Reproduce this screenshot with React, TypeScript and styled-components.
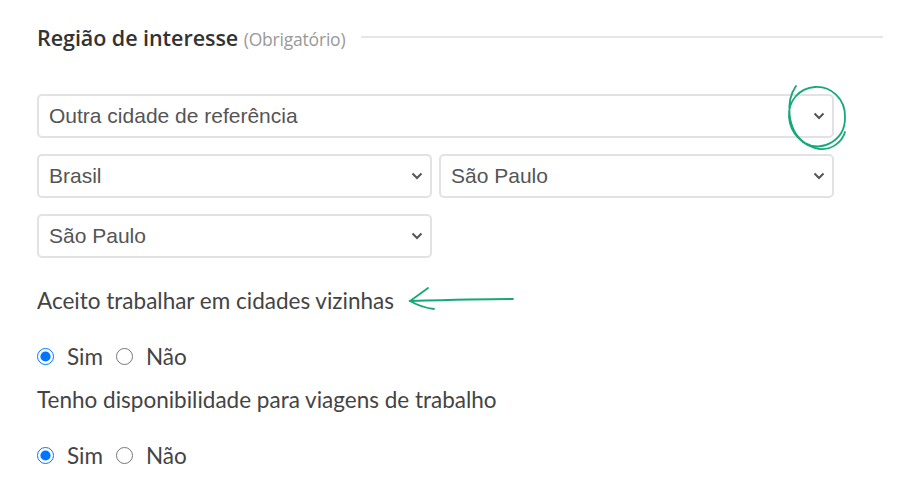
import styled, { createGlobalStyle } from "styled-components";

const GlobalStyle = createGlobalStyle`
  body {
    margin: 0;
    background: #fff;
  }
`;

const Page = styled.div`
  position: relative;
  width: 905px;
  height: 498px;
  padding: 22px 22px 0 37px;
  box-sizing: border-box;
  overflow: hidden;
`;

const TitleRow = styled.div`
  display: flex;
  align-items: center;
  gap: 16px;
  height: 30px;
`;

const Title = styled.h2`
  margin: 0;
  font-family: "Open Sans", sans-serif;
  font-weight: 600;
  font-size: 21.5px;
  letter-spacing: -0.05px;
  color: #333;
  white-space: nowrap;
`;

const Hint = styled.span`
  font-weight: 400;
  font-size: 17.5px;
  letter-spacing: -0.2px;
  color: #999;
`;

const Rule = styled.div`
  flex: 1;
  height: 2px;
  background: #e6e6e6;
`;

const Selects = styled.div`
  display: grid;
  grid-template-columns: 395px 395px;
  column-gap: 7px;
  row-gap: 16px;
  width: 797px;
  margin-top: 42px;
`;

const SelectBox = styled.div<{ $wide?: boolean }>`
  grid-column: ${(p) => (p.$wide ? "1 / 3" : "auto")};
  display: flex;
  align-items: center;
  justify-content: space-between;
  height: 44px;
  padding: 0 7px 0 10px;
  box-sizing: border-box;
  border: 2px solid #e2e2e2;
  border-radius: 5px;
  font-family: "Liberation Sans", Arial, sans-serif;
  font-size: 21px;
  color: #555;
`;

const Chevron = () => (
  <svg width="12" height="8" viewBox="0 0 12 8">
    <path d="M1.5 1.5 L6 6 L10.5 1.5" fill="none" stroke="#555" strokeWidth="2" />
  </svg>
);

const Question = styled.p<{ $top: number }>`
  margin: ${(p) => p.$top}px 0 0;
  font-family: Lato, sans-serif;
  font-size: 22.5px;
  line-height: 24px;
  color: #444;
`;

const RadioRow = styled.div<{ $top: number }>`
  display: flex;
  align-items: center;
  margin-top: ${(p) => p.$top}px;
  height: 24px;
  font-family: Lato, sans-serif;
  font-size: 22.5px;
  color: #444;
`;

const Option = styled.label`
  display: flex;
  align-items: center;
  gap: 13px;
  margin-right: 13px;
`;

const Radio = styled.input`
  width: 17px;
  height: 17px;
  margin: 0;
`;

const Annotation = styled.svg`
  position: absolute;
  left: 0;
  top: 0;
  pointer-events: none;
`;

const Select = ({ value, wide }: { value: string; wide?: boolean }) => (
  <SelectBox $wide={wide}>
    <span>{value}</span>
    <Chevron />
  </SelectBox>
);

const YesNo = ({ name, top }: { name: string; top: number }) => (
  <RadioRow $top={top}>
    <Option>
      <Radio type="radio" name={name} defaultChecked />
      Sim
    </Option>
    <Option>
      <Radio type="radio" name={name} />
      Não
    </Option>
  </RadioRow>
);

export default function App() {
  return (
    <>
      <GlobalStyle />
      <Page>
        <TitleRow>
          <Title>
            Região de interesse <Hint>(Obrigatório)</Hint>
          </Title>
          <Rule />
        </TitleRow>
        <Selects>
          <Select value="Outra cidade de referência" wide />
          <Select value="Brasil" />
          <Select value="São Paulo" />
          <Select value="São Paulo" />
        </Selects>
        <Question $top={31}>Aceito trabalhar em cidades vizinhas</Question>
        <YesNo name="vizinhas" top={31} />
        <Question $top={20}>Tenho disponibilidade para viagens de trabalho</Question>
        <YesNo name="viagens" top={31} />
        <Annotation width="905" height="498">
          <g fill="none" stroke="#15a878" strokeWidth="1.8" strokeLinecap="round">
            <path d="M796 86 C786 100 786 130 805 143 C822 153 845 140 845 118 C846 98 830 86 815 87 C800 88 788 100 789 117 C790 133 803 147 820 149 C832 150 842 142 845 132" />
            <path d="M410 301 C445 300 480 299 513 299" />
            <path d="M428 288 C420 294 414 298 410 301 C417 305 425 308 434 309" />
          </g>
        </Annotation>
      </Page>
    </>
  );
}
